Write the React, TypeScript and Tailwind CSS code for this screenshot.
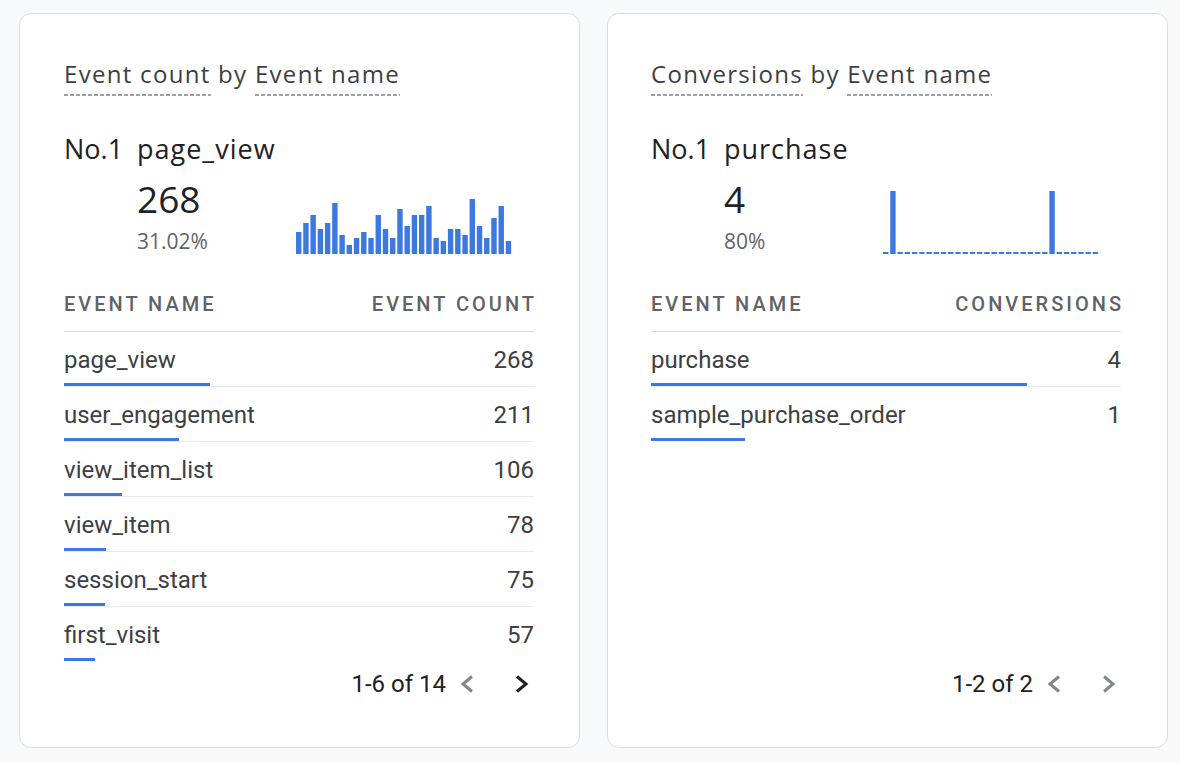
import React from "react";

const BLUE = "#3b78e0";

type Row = { name: string; value: number };

function Spark({ values }: { values: number[] }) {
  const slot = 217 / 30;
  return (
    <svg width="217" height="64" viewBox="0 0 217 64" className="mb-[1px] shrink-0">
      {values.map((v, i) =>
        v > 0 ? (
          <rect key={i} x={i * slot} y={64 - v} width={5.4} height={v} fill={BLUE} />
        ) : (
          <rect key={i} x={i * slot} y={62} width={5.4} height={2} fill={BLUE} />
        )
      )}
    </svg>
  );
}

function Chevron({ dir, color }: { dir: "left" | "right"; color: string }) {
  return (
    <svg width="14" height="18" viewBox="0 0 14 18">
      <polyline
        points={dir === "left" ? "12,1.5 3,9 12,16.5" : "2,1.5 11,9 2,16.5"}
        fill="none"
        stroke={color}
        strokeWidth="3"
      />
    </svg>
  );
}

const dashed =
  "pb-[6px] bg-[repeating-linear-gradient(to_right,#9aa0a6_0_4px,transparent_4px_6px)] bg-no-repeat bg-bottom bg-[length:100%_2px]";

function Card({
  metric,
  colLabel,
  top,
  bigValue,
  pct,
  spark,
  rows,
  total,
  pageText,
  nextEnabled,
  padClass,
}: {
  metric: string;
  colLabel: string;
  top: string;
  bigValue: string;
  pct: string;
  spark: number[];
  rows: Row[];
  total: number;
  pageText: string;
  nextEnabled: boolean;
  padClass: string;
}) {
  return (
    <div
      className={
        "w-[561px] h-[735px] shrink-0 bg-white border border-[#dadce0] rounded-[12px] pt-[44px] pb-[47px] flex flex-col " +
        padClass
      }
    >
      <div className="flex font-['Open_Sans',sans-serif] text-[24px] leading-[32px] text-[#3c4043] tracking-[1.3px]">
        <span className={dashed + " pb-[5px]"}>{metric}</span>
        <span className="whitespace-pre"> by </span>
        <span className={dashed + " pb-[5px]"}>Event name</span>
      </div>

      <div className="mt-[37px] flex font-['Open_Sans',sans-serif] text-[27px] leading-[32px] tracking-[1px] text-[#202124]">
        <span className="w-[73px] shrink-0 tracking-normal">No.1</span>
        <span>{top}</span>
      </div>

      <div className="mt-[14px] flex items-end">
        <div className="w-[73px] shrink-0" />
        <div className="w-[159px] shrink-0 font-['Open_Sans',sans-serif]">
          <div className="text-[37px] leading-[40px] text-[#202124]">{bigValue}</div>
          <div className="mt-[8px] text-[21px] leading-[28px] text-[#5f6368]">{pct}</div>
        </div>
        <Spark values={spark} />
      </div>

      <div className="mt-[37px] flex justify-between text-[20px] leading-[24px] font-medium tracking-[3px] text-[#5f6368] pb-[15px] border-b border-[#dadce0]">
        <span>EVENT NAME</span>
        <span className="-mr-[3px]">{colLabel}</span>
      </div>

      {rows.map((r, i) => (
        <div
          key={r.name}
          className={
            "pt-[14px] " + (i < rows.length - 1 ? "border-b border-[#e8eaed]" : "")
          }
        >
          <div className="flex justify-between text-[24px] leading-[29px] text-[#3c4043]">
            <span>{r.name}</span>
            <span>{r.value}</span>
          </div>
          <div
            className="mt-[8px] h-[3px] bg-[#3b78e0]"
            style={{ width: `${(r.value / total) * 470}px` }}
          />
        </div>
      ))}

      <div className="mt-auto flex justify-end items-center h-[32px] text-[24px] text-[#202124]">
        <span>{pageText}</span>
        <span className="ml-[14px] flex">
          <Chevron dir="left" color="#80868b" />
        </span>
        <span className="ml-[41px] mr-[5px] flex">
          <Chevron dir="right" color={nextEnabled ? "#202124" : "#80868b"} />
        </span>
      </div>
    </div>
  );
}

export default function App() {
  const spark1 = [
    22, 31, 39, 25, 31, 51, 19, 9, 16, 22, 16, 39, 25, 16, 45, 28, 39, 39, 48, 16, 13, 25, 25, 19,
    55, 28, 16, 36, 48, 13,
  ];
  const spark2 = Array.from({ length: 30 }, (_, i) => (i === 1 || i === 23 ? 63 : 0));
  return (
    <div className="w-[1180px] h-[762px] bg-[#f8f9fa] flex items-start pt-[13px] pl-[19px] gap-[27px] font-['Roboto',sans-serif]">
      <Card
        metric="Event count"
        colLabel="EVENT COUNT"
        top="page_view"
        bigValue="268"
        pct="31.02%"
        spark={spark1}
        rows={[
          { name: "page_view", value: 268 },
          { name: "user_engagement", value: 211 },
          { name: "view_item_list", value: 106 },
          { name: "view_item", value: 78 },
          { name: "session_start", value: 75 },
          { name: "first_visit", value: 57 },
        ]}
        total={864}
        pageText="1-6 of 14"
        nextEnabled={true}
        padClass="pl-[44px] pr-[45px]"
      />
      <Card
        metric="Conversions"
        colLabel="CONVERSIONS"
        top="purchase"
        bigValue="4"
        pct="80%"
        spark={spark2}
        rows={[
          { name: "purchase", value: 4 },
          { name: "sample_purchase_order", value: 1 },
        ]}
        total={5}
        pageText="1-2 of 2"
        nextEnabled={false}
        padClass="pl-[43px] pr-[46px]"
      />
    </div>
  );
}
